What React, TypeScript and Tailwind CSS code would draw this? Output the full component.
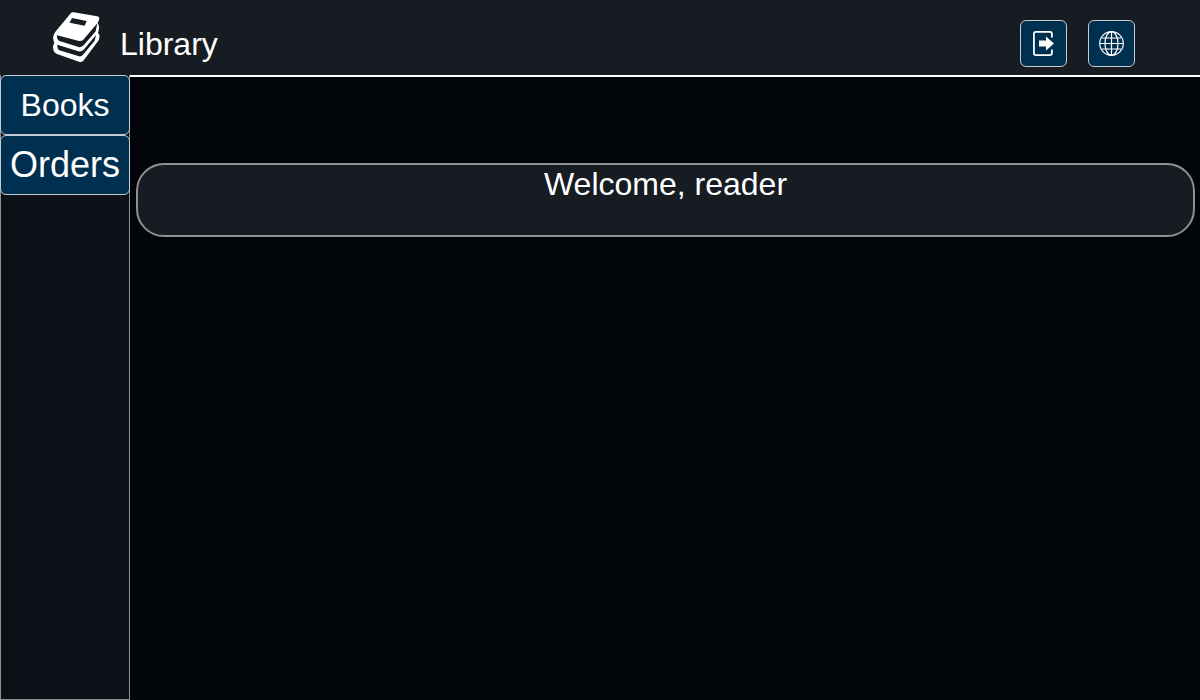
import type { ReactNode } from "react";

function BooksLogo() {
  return (
    <svg viewBox="36 33 144 156" className="h-[52px] w-12" fill="none" aria-hidden="true">
      <path
        d="M101 37 L172 49 Q181 51 177 59 L173 70 Q178 76 177 87 L174 99 L178 104 Q180 116 174 124 L130 182 Q125 188 117 185 L49 161 Q39 156 39 142 Q39 134 43 129 Q37 116 41 105 Q43 99 48 93 L91 41 Q95 36 101 37 Z"
        fill="#fff"
      />
      <path d="M96 54 L140 63 L134 77 L89 68 Z" fill="#171b22" />
      <path d="M51 106 L117 123 Q125 124 130 119 L172 70 L167 94 L131 136 Q124 143 116 141 L58 123 Q50 119 51 106 Z" fill="#171b22" />
      <path d="M52 134 L115 154 Q125 156 131 149 L168 105 L164 122 L129 164 Q123 171 117 169 L58 151 Q51 147 52 134 Z" fill="#171b22" />
    </svg>
  );
}

function ExitIcon() {
  return (
    <svg viewBox="0 0 21 25" className="h-[25px] w-[21px]" fill="none" aria-hidden="true">
      <path
        d="M18.9 6.5 V3 Q18.9 .9 16.8 .9 H3 Q.9 .9 .9 3 V22 Q.9 24.1 3 24.1 H16.8 Q18.9 24.1 18.9 22 V18.5"
        stroke="#fff"
        strokeWidth="1.8"
      />
      <path d="M6 9.5 H13 V5.5 L21 12.5 L13 19.5 V15.5 H6 Z" fill="#fff" />
    </svg>
  );
}

function GlobeIcon() {
  return (
    <svg viewBox="0 0 25 25" className="size-[25px]" fill="none" stroke="#fff" strokeWidth="1.2" aria-hidden="true">
      <circle cx="12.5" cy="12.5" r="11.8" />
      <ellipse cx="12.5" cy="12.5" rx="6.5" ry="11.8" />
      <path d="M12.5 1 V24 M1 12.5 H24 M3 7 H22 M3 18 H22" />
    </svg>
  );
}

function IconButton({ label, children }: { label: string; children: ReactNode }) {
  return (
    <button
      type="button"
      aria-label={label}
      className="flex size-[47px] items-center justify-center rounded-md border border-[#c5cdd3] bg-[#003050]"
    >
      {children}
    </button>
  );
}

export default function App() {
  return (
    <div className="flex min-h-screen flex-col bg-[#010409] font-['Liberation_Sans',Arial,sans-serif] text-white">
      <header className="flex h-[75px] items-start justify-between bg-[#171b22] pr-[65px] pl-[52px]">
        <div className="flex gap-5 pt-[11px]">
          <BooksLogo />
          <h1 className="pt-[15px] text-[32px] leading-9">Library</h1>
        </div>
        <div className="flex gap-[21px] pt-5">
          <IconButton label="Log out">
            <ExitIcon />
          </IconButton>
          <IconButton label="Language">
            <GlobeIcon />
          </IconButton>
        </div>
      </header>
      <div className="flex flex-1">
        <nav className="flex w-[130px] shrink-0 flex-col border border-t-0 border-[#8d8f92] bg-[#0d1117]">
          <button
            type="button"
            className="-mx-px h-[60px] rounded-md border border-[#c5cdd3] bg-[#003050] text-[32px] leading-9"
          >
            Books
          </button>
          <button
            type="button"
            className="-mx-px h-[60px] rounded-md border border-[#c5cdd3] bg-[#003050] text-[36px] leading-9"
          >
            Orders
          </button>
        </nav>
        <main className="flex-1 border-t-2 border-white pt-[86px] pr-[5px] pl-[6px]">
          <section className="h-[74px] rounded-[28px] border-2 border-[#8d8f92] bg-[#171b22] text-center">
            <h2 className="text-[32px] leading-[38px]">Welcome, reader</h2>
          </section>
        </main>
      </div>
    </div>
  );
}
